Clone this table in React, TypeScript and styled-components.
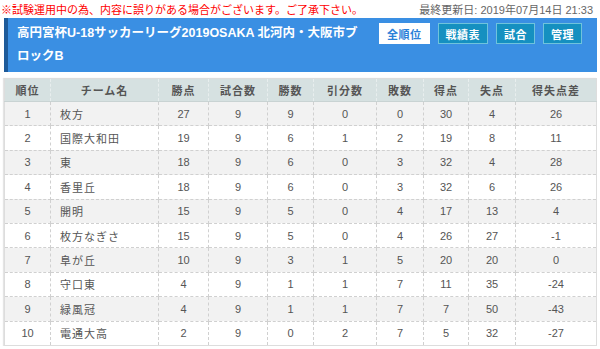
import styled, { createGlobalStyle } from 'styled-components';

const GlobalStyle = createGlobalStyle`
  body {
    margin: 0;
    background: #fff;
    font-family: "Liberation Sans", "Noto Sans CJK JP", sans-serif;
  }
`;

type Team = {
  name: string;
  points: number;
  played: number;
  won: number;
  drawn: number;
  lost: number;
  scored: number;
  conceded: number;
  diff: number;
};

const teams: Team[] = [
  { name: '枚方', points: 27, played: 9, won: 9, drawn: 0, lost: 0, scored: 30, conceded: 4, diff: 26 },
  { name: '国際大和田', points: 19, played: 9, won: 6, drawn: 1, lost: 2, scored: 19, conceded: 8, diff: 11 },
  { name: '東', points: 18, played: 9, won: 6, drawn: 0, lost: 3, scored: 32, conceded: 4, diff: 28 },
  { name: '香里丘', points: 18, played: 9, won: 6, drawn: 0, lost: 3, scored: 32, conceded: 6, diff: 26 },
  { name: '開明', points: 15, played: 9, won: 5, drawn: 0, lost: 4, scored: 17, conceded: 13, diff: 4 },
  { name: '枚方なぎさ', points: 15, played: 9, won: 5, drawn: 0, lost: 4, scored: 26, conceded: 27, diff: -1 },
  { name: '阜が丘', points: 10, played: 9, won: 3, drawn: 1, lost: 5, scored: 20, conceded: 20, diff: 0 },
  { name: '守口東', points: 4, played: 9, won: 1, drawn: 1, lost: 7, scored: 11, conceded: 35, diff: -24 },
  { name: '緑風冠', points: 4, played: 9, won: 1, drawn: 1, lost: 7, scored: 7, conceded: 50, diff: -43 },
  { name: '電通大高', points: 2, played: 9, won: 0, drawn: 2, lost: 7, scored: 5, conceded: 32, diff: -27 },
];

const columns = [
  { label: '順位', width: 46 },
  { label: 'チーム名', width: 108 },
  { label: '勝点', width: 50 },
  { label: '試合数', width: 59 },
  { label: '勝数', width: 46 },
  { label: '引分数', width: 63 },
  { label: '敗数', width: 47 },
  { label: '得点', width: 45 },
  { label: '失点', width: 47 },
  { label: '得失点差', width: 81 },
];

const navButtons = [
  { label: '全順位', active: true },
  { label: '戦績表', active: false },
  { label: '試合', active: false },
  { label: '管理', active: false },
];

export default function App() {
  return (
    <>
      <GlobalStyle />
      <Notice>
        <Warning>※試験運用中の為、内容に誤りがある場合がございます。ご了承下さい。</Warning>
        <Updated>最終更新日: 2019年07月14日 21:33</Updated>
      </Notice>
      <Page>
        <Header>
          <Title>高円宮杯U-18サッカーリーグ2019OSAKA 北河内・大阪市ブロックB</Title>
          <Nav>
            {navButtons.map((b) => (
              <NavButton key={b.label} $active={b.active}>
                {b.label}
              </NavButton>
            ))}
          </Nav>
        </Header>
        <Table>
          <colgroup>
            {columns.map((c) => (
              <col key={c.label} style={{ width: c.width }} />
            ))}
          </colgroup>
          <thead>
            <tr>
              {columns.map((c) => (
                <Th key={c.label}>{c.label}</Th>
              ))}
            </tr>
          </thead>
          <tbody>
            {teams.map((t, i) => (
              <Row key={t.name} $odd={i % 2 === 0}>
                <Td>{i + 1}</Td>
                <NameTd>{t.name}</NameTd>
                <Td>{t.points}</Td>
                <Td>{t.played}</Td>
                <Td>{t.won}</Td>
                <Td>{t.drawn}</Td>
                <Td>{t.lost}</Td>
                <Td>{t.scored}</Td>
                <Td>{t.conceded}</Td>
                <Td>{t.diff}</Td>
              </Row>
            ))}
          </tbody>
        </Table>
      </Page>
    </>
  );
}

const Notice = styled.div`
  display: flex;
  justify-content: space-between;
  align-items: center;
  height: 18px;
  padding: 0 7px 0 1px;
  font-size: 11px;
`;

const Warning = styled.span`
  color: #f00;
`;

const Updated = styled.span`
  color: #666;
`;

const Page = styled.div`
  padding: 0 3px 0 4px;
`;

const Header = styled.div`
  display: flex;
  justify-content: space-between;
  align-items: flex-start;
  height: 54px;
  box-sizing: border-box;
  padding: 4px 15px 4px 9px;
  background: #3a8fe3;
  border-left: 4px solid #1d5a99;
`;

const Title = styled.h1`
  margin: 0;
  width: 352px;
  color: #fff;
  font-size: 12.5px;
  font-weight: bold;
  line-height: 23px;
`;

const Nav = styled.div`
  display: flex;
  gap: 8px;
  margin-top: 1px;
`;

const NavButton = styled.button<{ $active: boolean }>`
  height: 21px;
  padding: 0 7px;
  border: 1px solid ${(p) => (p.$active ? '#fff' : '#6fc3dc')};
  background: ${(p) => (p.$active ? '#fff' : '#1590c0')};
  color: ${(p) => (p.$active ? '#2a80d8' : '#fff')};
  font-family: inherit;
  font-size: 11px;
  font-weight: bold;
  letter-spacing: 0.5px;
  cursor: pointer;
`;

const Table = styled.table`
  width: 593px;
  margin-top: 6px;
  border-collapse: collapse;
  table-layout: fixed;
  border: 1px solid #ddd;
  box-shadow: -1px 0 1px #e4e4e4;
  font-size: 11px;
  color: #555;
`;

const Th = styled.th`
  height: 22px;
  padding: 0;
  background: #d6e1e1;
  border: 1px dashed #e8eeee;
  border-bottom: 1px solid #c9d3d3;
  font-weight: bold;
  color: #555;
  letter-spacing: 1px;
`;

const Row = styled.tr<{ $odd: boolean }>`
  background: ${(p) => (p.$odd ? '#f2f2f2' : '#fff')};
`;

const Td = styled.td`
  height: 23.4px;
  padding: 0;
  text-align: center;
  border: 1px dashed #d0d0d0;
`;

const NameTd = styled(Td)`
  text-align: left;
  padding-left: 9px;
  letter-spacing: 1px;
`;
